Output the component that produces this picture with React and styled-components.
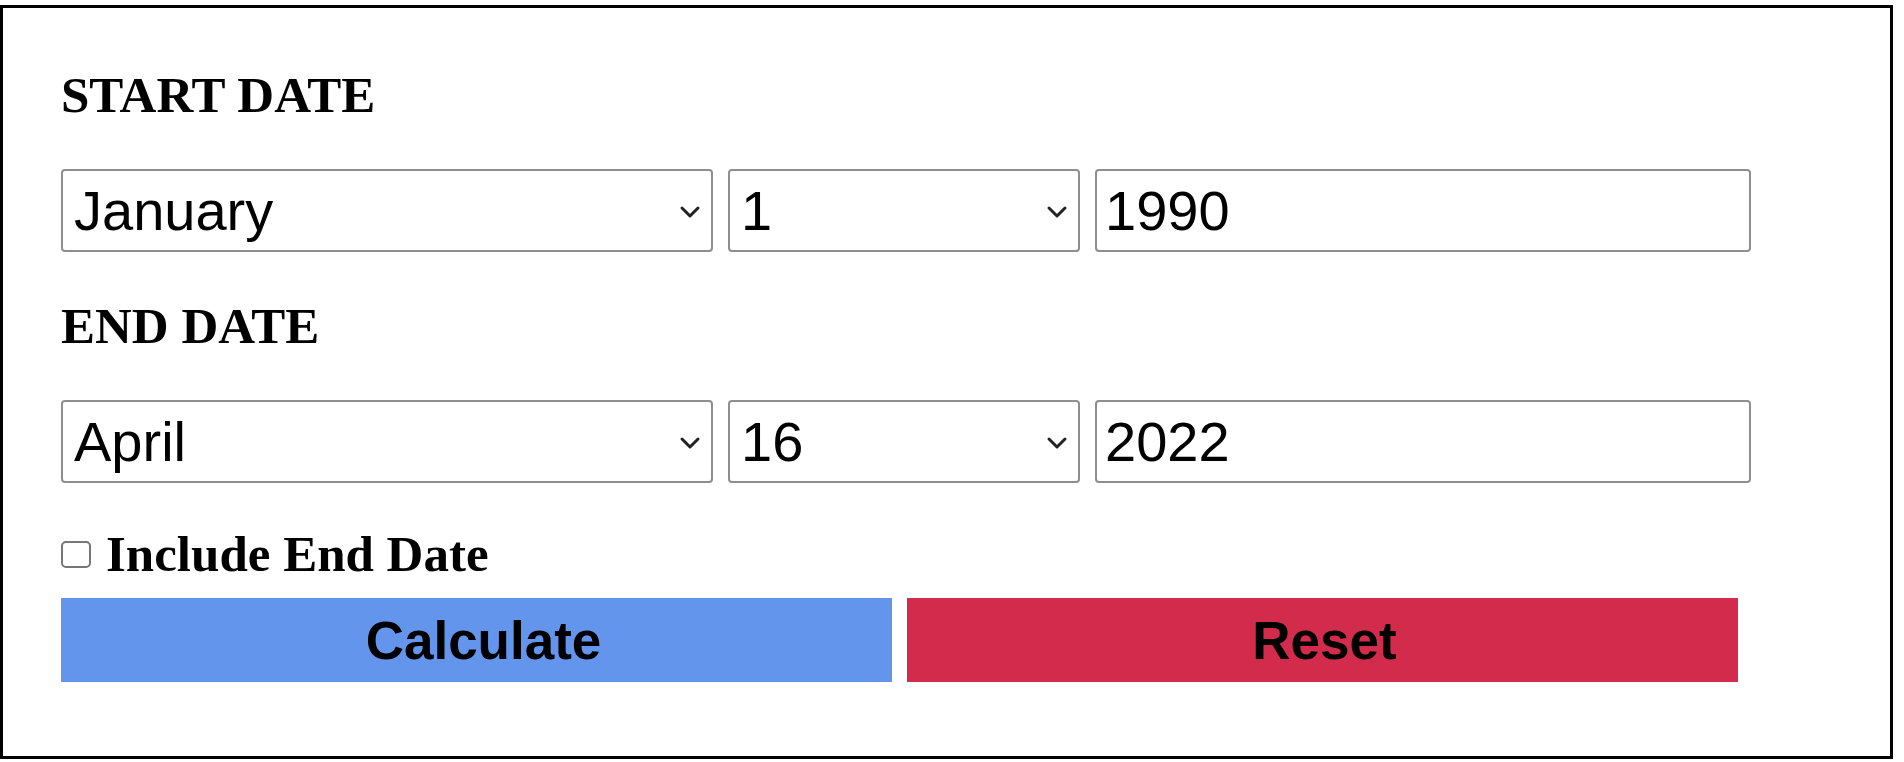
import React, { useState } from 'react'
import styled, { createGlobalStyle } from 'styled-components'

const GlobalStyle = createGlobalStyle`
  body {
    margin: 0;
    background: #fff;
  }
`

const MONTHS = [
  'January', 'February', 'March', 'April', 'May', 'June',
  'July', 'August', 'September', 'October', 'November', 'December',
]
const DAYS = Array.from({ length: 31 }, (_, i) => i + 1)

const Frame = styled.form`
  box-sizing: border-box;
  width: 1893px;
  height: 754px;
  margin-top: 5px;
  padding: 62px 0 0 58px;
  border: 3px solid #000;
  display: flex;
  flex-direction: column;
  align-items: flex-start;
`

const Heading = styled.h2`
  margin: ${(p) => p.$top || 0}px 0 ${(p) => p.$bottom || 0}px;
  font-family: 'Liberation Serif', 'Times New Roman', serif;
  font-weight: 700;
  font-size: 51px;
  line-height: 51px;
  color: #000;
`

const FieldRow = styled.div`
  display: flex;
  gap: 15px;
`

const SelectWrap = styled.div`
  position: relative;
  width: ${(p) => p.$width}px;
  height: 83px;
`

const fieldBase = `
  box-sizing: border-box;
  width: 100%;
  height: 83px;
  margin: 0;
  border: 2px solid #8e8e8e;
  border-radius: 4px;
  background: #fff;
  color: #000;
  font-family: 'Liberation Sans', Arial, sans-serif;
  font-size: 56px;
  outline: none;
`

const Select = styled.select`
  ${fieldBase}
  appearance: none;
  padding: 0 50px 0 11px;
`

const Chevron = styled.svg`
  display: block;
  position: absolute;
  right: 12px;
  top: 36px;
  width: 22px;
  height: 14px;
  pointer-events: none;
`

const YearInput = styled.input`
  ${fieldBase}
  width: ${(p) => p.$width}px;
  padding: 0 8px;
`

const CheckRow = styled.label`
  display: flex;
  align-items: center;
  height: 51px;
  margin-top: 46px;
  font-family: 'Liberation Serif', 'Times New Roman', serif;
  font-weight: 700;
  font-size: 51px;
  line-height: 51px;
  color: #000;
`

const Box = styled.input`
  appearance: none;
  box-sizing: border-box;
  width: 30px;
  height: 27px;
  margin: 0 15px 0 0;
  border: 2px solid #777;
  border-radius: 5px;
  background: #fff;

  &:checked {
    background: #0075ff;
    border-color: #0075ff;
  }
`

const ButtonRow = styled.div`
  display: flex;
  gap: 15px;
  margin-top: 18px;
`

const Button = styled.button`
  width: 831px;
  height: 84px;
  margin: 0;
  padding: 0 0 0 ${(p) => (p.$tone === 'reset' ? 4 : 14)}px;
  border: none;
  background: ${(p) => (p.$tone === 'reset' ? '#d22b4c' : '#6495ed')};
  color: #000;
  font-family: 'Liberation Sans', Arial, sans-serif;
  font-weight: 700;
  font-size: 53px;
  cursor: pointer;
`

const DateSelect = ({ width, value, onChange, options }) => (
  <SelectWrap $width={width}>
    <Select value={value} onChange={(e) => onChange(e.target.value)}>
      {options.map((o) => (
        <option key={o} value={o}>{o}</option>
      ))}
    </Select>
    <Chevron width='22' height='14' viewBox='0 0 22 14'>
      <path d='M3 3 L11 11 L19 3' fill='none' stroke='#222' strokeWidth='3' strokeLinecap='round' strokeLinejoin='round' />
    </Chevron>
  </SelectWrap>
)

const DateFields = ({ date, setDate }) => (
  <FieldRow>
    <DateSelect width={652} value={date.month} options={MONTHS} onChange={(month) => setDate({ ...date, month })} />
    <DateSelect width={352} value={date.day} options={DAYS} onChange={(day) => setDate({ ...date, day })} />
    <YearInput $width={656} value={date.year} onChange={(e) => setDate({ ...date, year: e.target.value })} />
  </FieldRow>
)

const initialStart = { month: 'January', day: '1', year: '1990' }
const initialEnd = { month: 'April', day: '16', year: '2022' }

export default function App() {
  const [start, setStart] = useState(initialStart)
  const [end, setEnd] = useState(initialEnd)
  const [includeEnd, setIncludeEnd] = useState(false)

  const reset = () => {
    setStart(initialStart)
    setEnd(initialEnd)
    setIncludeEnd(false)
  }

  return (
    <>
      <GlobalStyle />
      <Frame onSubmit={(e) => e.preventDefault()}>
        <Heading $bottom={48}>START DATE</Heading>
        <DateFields date={start} setDate={setStart} />
        <Heading $top={49} $bottom={48}>END DATE</Heading>
        <DateFields date={end} setDate={setEnd} />
        <CheckRow>
          <Box type='checkbox' checked={includeEnd} onChange={(e) => setIncludeEnd(e.target.checked)} />
          Include End Date
        </CheckRow>
        <ButtonRow>
          <Button type='submit'>Calculate</Button>
          <Button type='button' $tone='reset' onClick={reset}>Reset</Button>
        </ButtonRow>
      </Frame>
    </>
  )
}
